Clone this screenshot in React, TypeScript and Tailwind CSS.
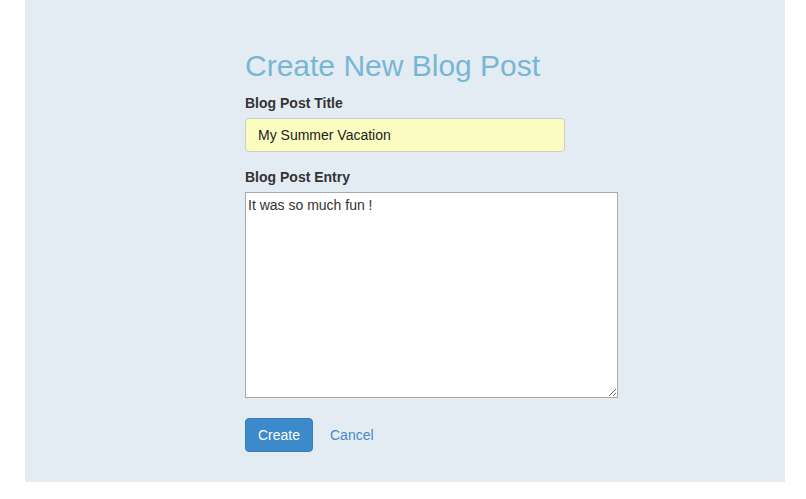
export default function App() {
  return (
    <div className="min-h-[499px] bg-white font-['Liberation_Sans',Arial,sans-serif] text-[14px] leading-[20px] text-[#333]">
      <div className="ml-[25px] h-[482px] w-[760px] bg-[#e4ecf3] pl-[220px] pt-[49px]">
        <form className="w-[373px]" onSubmit={(e) => e.preventDefault()}>
          <h2 className="mb-[11px] text-[30px] leading-[33px] text-[#77b7d4]">
            Create New Blog Post
          </h2>

          {/* Title */}
          <div className="mb-[15px]">
            <label className="mb-[5px] block font-bold">Blog Post Title</label>
            <input
              type="text"
              defaultValue="My Summer Vacation"
              className="block h-[34px] w-[320px] rounded-[4px] border border-[#ccc] bg-[#fafdbf] px-[12px] text-[14px] text-[#222] outline-none"
            />
          </div>

          {/* Entry */}
          <div>
            <label className="mb-[5px] block font-bold">Blog Post Entry</label>
            <textarea
              defaultValue="It was so much fun !"
              className="block h-[206px] w-[373px] border border-[#a9a9a9] bg-white p-[2px] text-[14px] leading-[20px] text-[#333] outline-none"
            />
          </div>

          {/* Actions */}
          <div className="mt-[20px] flex items-center">
            <button
              type="submit"
              className="h-[34px] w-[68px] rounded-[4px] border border-[#357ebd] bg-[#3d8acb] text-[14px] text-white"
            >
              Create
            </button>
            <a href="#" className="ml-[17px] text-[14px] text-[#428bca]">
              Cancel
            </a>
          </div>
        </form>
      </div>
    </div>
  );
}
